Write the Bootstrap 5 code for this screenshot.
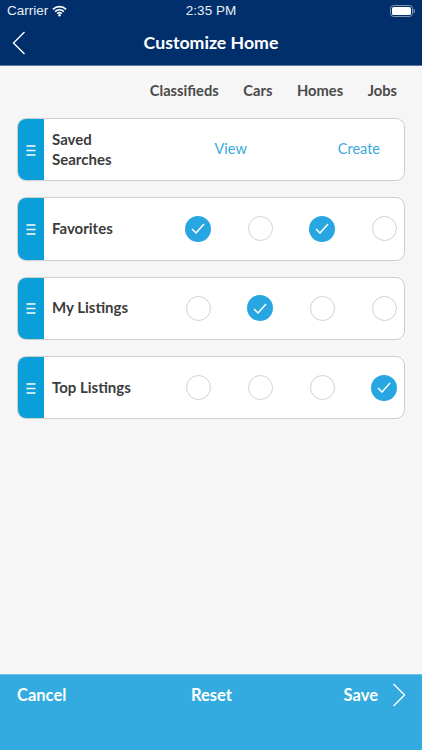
<!DOCTYPE html>
<html lang="en">
<head>
<meta charset="utf-8">
<title>Customize Home</title>
<link href="https://cdn.jsdelivr.net/npm/bootstrap@5.3.0/dist/css/bootstrap.min.css" rel="stylesheet">
<style>
html,body{height:100%;margin:0}
body{background:#f6f6f6;font-family:"Lato","Liberation Sans",sans-serif;overflow:hidden}
.app-page{width:422px;height:750px}
.top-head{background:#012f6b;height:66px;color:#fff;border-bottom:1px solid #5d7ba0;flex:none}
.status-row{height:22px;padding:0 7px;font-size:13.5px;font-family:"Liberation Sans",sans-serif;color:#e8edf4}
.status-side{width:120px}
.title-row{height:43px}
.head-title{font-size:17.7px;font-weight:700}
.back-ico{left:12px;top:9px}
.col-heads{height:52px;padding-bottom:3px;font-size:14.7px;font-weight:700;color:#4a4a4a}
.col-strip{padding-right:25px;gap:24.6px}
.pref-list{padding:0 17px;gap:16px}
.pref-card{height:63.3px;background:#fff;border:1px solid #cfcfcf;border-bottom-width:1.5px;border-radius:9px;overflow:hidden;flex:none}
.pref-handle{width:27px;background:#0a9fd9;margin:-1px 0 -2px -1px;flex:none}
.pref-name{padding:0 0 2px 8px;font-size:15px;font-weight:700;color:#3c3c3c;line-height:20px;flex:none}
.pref-cells{padding-right:7px;gap:36px}
.pref-cell{width:26px;display:flex;justify-content:center;align-items:center}
.pref-links{padding:0 24px 2px 0;gap:91px}
.pref-link{font-size:14.5px;color:#3aa9d9}
.tick-off{width:25px;height:25px;border-radius:50%;border:1.5px solid #d2d2d2;background:#fff}
.tick-on{width:26px;height:26px;border-radius:50%;background:#27a6e2;display:flex;align-items:center;justify-content:center}
.foot-bar{background:#33abe0;height:76px;border-top:1px solid #6cc0e8;color:#fff;font-size:16.5px;font-weight:700;padding:8px 16px 0 17px;margin-top:auto;flex:none}
.foot-cell{height:24px}
.foot-center{left:0;right:0;text-align:center}
.save-label{margin-right:14px}
</style>
</head>
<body>
<div class="app-page d-flex flex-column">
  <header class="top-head">
    <div class="status-row d-flex align-items-center justify-content-between">
      <div class="status-side d-flex align-items-center gap-1">
        <span>Carrier</span>
        <svg width="15" height="12" viewBox="0 0 16 12"><path d="M1 4.2a10 10 0 0 1 14 0M3.3 6.6a6.7 6.7 0 0 1 9.4 0M5.6 8.9a3.4 3.4 0 0 1 4.8 0" fill="none" stroke="#fff" stroke-width="1.8"/><circle cx="8" cy="10.6" r="1.3" fill="#fff"/></svg>
      </div>
      <span>2:35 PM</span>
      <div class="status-side d-flex justify-content-end">
        <svg width="25" height="12" viewBox="0 0 25 12"><rect x=".5" y=".5" width="22" height="11" rx="3" fill="none" stroke="#8296b4"/><rect x="2" y="2" width="19" height="8" rx="1.6" fill="#fff"/><rect x="23.5" y="4" width="1.3" height="4" rx=".6" fill="#8296b4"/></svg>
      </div>
    </div>
    <div class="title-row position-relative d-flex align-items-center justify-content-center">
      <svg class="back-ico position-absolute" width="14" height="24" viewBox="0 0 14 24"><path d="M12.5 1 1.5 12l11 11" fill="none" stroke="#fff" stroke-width="1.4"/></svg>
      <span class="head-title">Customize Home</span>
    </div>
  </header>
  <div class="col-heads d-flex align-items-center justify-content-end col-strip">
    <span>Classifieds</span><span>Cars</span><span>Homes</span><span>Jobs</span>
  </div>
  <main class="pref-list d-flex flex-column">
    <div class="pref-card d-flex align-items-center">
      <div class="pref-handle align-self-stretch d-flex align-items-center justify-content-center"><svg width="10" height="11" viewBox="0 0 10 11"><path d="M.5 1h9M.5 5.5h9M.5 10h9" stroke="#fff" stroke-width="1.4"/></svg></div>
      <div class="pref-name">Saved<br>Searches</div>
      <div class="pref-links d-flex align-items-center ms-auto"><span class="pref-link">View</span><span class="pref-link">Create</span></div>
    </div>
    <div class="pref-card d-flex align-items-center">
      <div class="pref-handle align-self-stretch d-flex align-items-center justify-content-center"><svg width="10" height="11" viewBox="0 0 10 11"><path d="M.5 1h9M.5 5.5h9M.5 10h9" stroke="#fff" stroke-width="1.4"/></svg></div>
      <div class="pref-name">Favorites</div>
      <div class="pref-cells d-flex align-items-center ms-auto">
        <div class="pref-cell"><span class="tick-on"><svg width="14" height="11" viewBox="0 0 14 11"><path d="m1 6 4 4 8-9" fill="none" stroke="#fff" stroke-width="1.5"/></svg></span></div>
        <div class="pref-cell"><span class="tick-off"></span></div>
        <div class="pref-cell"><span class="tick-on"><svg width="14" height="11" viewBox="0 0 14 11"><path d="m1 6 4 4 8-9" fill="none" stroke="#fff" stroke-width="1.5"/></svg></span></div>
        <div class="pref-cell"><span class="tick-off"></span></div>
      </div>
    </div>
    <div class="pref-card d-flex align-items-center">
      <div class="pref-handle align-self-stretch d-flex align-items-center justify-content-center"><svg width="10" height="11" viewBox="0 0 10 11"><path d="M.5 1h9M.5 5.5h9M.5 10h9" stroke="#fff" stroke-width="1.4"/></svg></div>
      <div class="pref-name">My Listings</div>
      <div class="pref-cells d-flex align-items-center ms-auto">
        <div class="pref-cell"><span class="tick-off"></span></div>
        <div class="pref-cell"><span class="tick-on"><svg width="14" height="11" viewBox="0 0 14 11"><path d="m1 6 4 4 8-9" fill="none" stroke="#fff" stroke-width="1.5"/></svg></span></div>
        <div class="pref-cell"><span class="tick-off"></span></div>
        <div class="pref-cell"><span class="tick-off"></span></div>
      </div>
    </div>
    <div class="pref-card d-flex align-items-center">
      <div class="pref-handle align-self-stretch d-flex align-items-center justify-content-center"><svg width="10" height="11" viewBox="0 0 10 11"><path d="M.5 1h9M.5 5.5h9M.5 10h9" stroke="#fff" stroke-width="1.4"/></svg></div>
      <div class="pref-name">Top Listings</div>
      <div class="pref-cells d-flex align-items-center ms-auto">
        <div class="pref-cell"><span class="tick-off"></span></div>
        <div class="pref-cell"><span class="tick-off"></span></div>
        <div class="pref-cell"><span class="tick-off"></span></div>
        <div class="pref-cell"><span class="tick-on"><svg width="14" height="11" viewBox="0 0 14 11"><path d="m1 6 4 4 8-9" fill="none" stroke="#fff" stroke-width="1.5"/></svg></span></div>
      </div>
    </div>
  </main>
  <footer class="foot-bar">
    <div class="foot-cell d-flex align-items-center justify-content-between position-relative">
      <span>Cancel</span>
      <span class="foot-center position-absolute">Reset</span>
      <span class="d-flex align-items-center"><span class="save-label">Save</span><svg width="14" height="24" viewBox="0 0 14 24"><path d="M1.5 1l11 11-11 11" fill="none" stroke="#fff" stroke-width="1.4"/></svg></span>
    </div>
  </footer>
</div>
<script src="https://cdn.jsdelivr.net/npm/bootstrap@5.3.0/dist/js/bootstrap.bundle.min.js"></script>
</body>
</html>
